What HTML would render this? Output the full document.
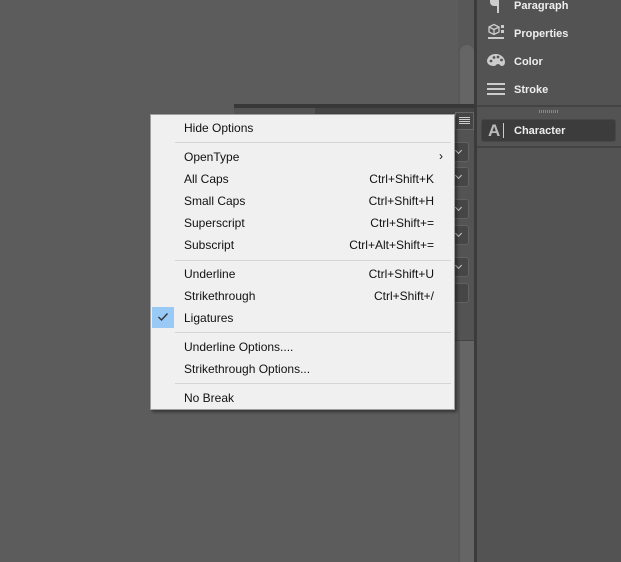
<!DOCTYPE html>
<html><head><style>
*{margin:0;padding:0;box-sizing:border-box}
body{width:621px;height:562px;background:#5c5c5c;position:relative;overflow:hidden;font-family:"Liberation Sans",sans-serif}
.a{position:absolute}
.menu{left:150px;top:114px;width:305px;height:296px;background:#f0f0f0;border:1px solid #a0a0a0;box-shadow:2px 2px 3px rgba(0,0,0,.45)}
.it{position:absolute;left:33px;font-size:12px;color:#111;line-height:14px}
.sc{position:absolute;font-size:12px;color:#111;line-height:14px;right:20px}
.sep{position:absolute;left:24px;right:3px;height:1px;background:#d5d5d5}
.rt{position:absolute;left:514px;font-size:11px;font-weight:bold;color:#eee}
.dd{position:absolute;left:447px;width:22px;height:20px;background:#464646;border:1px solid #626262;border-radius:3px}
.dd::after{content:"";position:absolute;left:8px;top:5px;width:4px;height:4px;border-right:1px solid #ccc;border-bottom:1px solid #ccc;transform:rotate(45deg)}
</style></head><body>
<!-- scrollbar -->
<div class="a" style="left:458px;top:0;width:17px;height:562px;background:#585858"></div>
<div class="a" style="left:460px;top:45px;width:14px;height:517px;background:#656565;border-radius:7px 7px 0 0"></div>
<div class="a" style="left:474px;top:0;width:3px;height:562px;background:#3b3b3b"></div>
<!-- right panel -->
<div class="a" style="left:477px;top:0;width:144px;height:562px;background:#535353"></div>
<div class="a" style="left:477px;top:105px;width:144px;height:2px;background:#434343"></div>
<div class="a" style="left:539px;top:110px;width:19px;height:3px;background:repeating-linear-gradient(90deg,#888 0 1px,transparent 1px 2px)"></div>
<div class="a" style="left:481px;top:119px;width:135px;height:23px;background:#3c3c3c;border:1px solid #474747;border-radius:3px"></div>
<div class="a" style="left:488px;top:121px;font-size:17px;font-weight:bold;color:#bbb">A</div>
<div class="a" style="left:503px;top:123px;width:1px;height:15px;background:#ccc"></div>
<div class="rt" style="top:125px">Character</div>
<div class="a" style="left:477px;top:146px;width:144px;height:2px;background:#434343"></div>
<div class="rt" style="top:0">Paragraph</div>
<div class="rt" style="top:28px">Properties</div>
<div class="rt" style="top:56px">Color</div>
<div class="rt" style="top:84px">Stroke</div>
<!-- icons -->
<div class="a" style="left:490px;top:0;width:7px;height:6px;background:#ccc;border-radius:0 0 0 4px"></div>
<div class="a" style="left:497px;top:0;width:2px;height:13px;background:#ccc"></div>
<svg class="a" style="left:486px;top:23px" width="20" height="20"><path d="M3 4l5-2.5 5 2.5v5l-5 2.5-5-2.5zM3 4l5 2.5 5-2.5M8 6.5v5" stroke="#ccc" fill="none" stroke-width="1.3"/><rect x="15" y="2" width="3" height="3" fill="#ccc"/><rect x="15" y="7" width="3" height="3" fill="#ccc"/><rect x="2" y="14" width="16" height="2" fill="#ccc"/></svg>
<svg class="a" style="left:486px;top:52px" width="20" height="18"><path d="M10 2C4 2 1 6 1 9c0 3 3 5 7 5 2 0 2-2 4-2s2 2 4 2c2 0 3-2 3-4 0-4-4-8-9-8z" fill="#ccc"/><circle cx="5" cy="9" r="1.4" fill="#535353"/><circle cx="8" cy="5.5" r="1.4" fill="#535353"/><circle cx="12" cy="5" r="1.4" fill="#535353"/><circle cx="15.5" cy="8" r="1.4" fill="#535353"/></svg>
<div class="a" style="left:487px;top:83px;width:18px;height:2px;background:#ccc"></div>
<div class="a" style="left:487px;top:88px;width:18px;height:2px;background:#ccc"></div>
<div class="a" style="left:487px;top:93px;width:18px;height:2px;background:#ccc"></div>
<!-- panel behind -->
<div class="a" style="left:234px;top:104px;width:240px;height:237px;background:#535353"></div>
<div class="a" style="left:234px;top:104px;width:240px;height:4px;background:#383838"></div>
<div class="a" style="left:315px;top:108px;width:159px;height:6px;background:#454545"></div>
<div class="a" style="left:455px;top:112px;width:19px;height:18px;background:#454545;border:1px solid #666"></div>
<div class="a" style="left:459px;top:117px;width:11px;height:7px;background:repeating-linear-gradient(#ccc 0 1px,transparent 1px 2px)"></div>
<div class="dd" style="top:142px"></div>
<div class="dd" style="top:167px"></div>
<div class="dd" style="top:199px"></div>
<div class="dd" style="top:225px"></div>
<div class="dd" style="top:257px"></div>
<div class="a" style="left:447px;top:283px;width:22px;height:20px;background:#464646;border:1px solid #626262;border-radius:3px"></div>
<div class="a" style="left:234px;top:340px;width:240px;height:1px;background:#444"></div>
<!-- menu -->
<div class="a menu">
<div class="it" style="top:6px">Hide Options</div>
<div class="sep" style="top:27px"></div>
<div class="it" style="top:35px">OpenType</div><div class="sc" style="top:34px;right:11px">›</div>
<div class="it" style="top:57px">All Caps</div><div class="sc" style="top:57px">Ctrl+Shift+K</div>
<div class="it" style="top:79px">Small Caps</div><div class="sc" style="top:79px">Ctrl+Shift+H</div>
<div class="it" style="top:101px">Superscript</div><div class="sc" style="top:101px">Ctrl+Shift+=</div>
<div class="it" style="top:123px">Subscript</div><div class="sc" style="top:123px">Ctrl+Alt+Shift+=</div>
<div class="sep" style="top:145px"></div>
<div class="it" style="top:152px">Underline</div><div class="sc" style="top:152px">Ctrl+Shift+U</div>
<div class="it" style="top:174px">Strikethrough</div><div class="sc" style="top:174px">Ctrl+Shift+/</div>
<div class="a" style="left:1px;top:192px;width:22px;height:21px;background:#99c9f5"></div>
<svg class="a" style="left:6px;top:197px" width="12" height="10"><path d="M1.5 5l3 3 6-6.5" stroke="#333" fill="none" stroke-width="1.4"/></svg>
<div class="it" style="top:196px">Ligatures</div>
<div class="sep" style="top:217px"></div>
<div class="it" style="top:225px">Underline Options....</div>
<div class="it" style="top:247px">Strikethrough Options...</div>
<div class="sep" style="top:268px"></div>
<div class="it" style="top:276px">No Break</div>
</div>
</body></html>
